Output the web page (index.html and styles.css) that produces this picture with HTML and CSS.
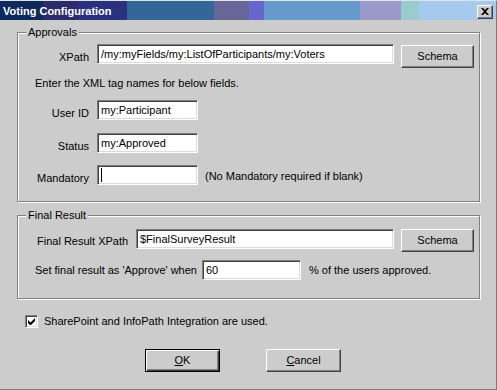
FILE: index.html
```html
<!DOCTYPE html>
<html lang="en">
<head>
<meta charset="UTF-8" />
<title>Voting Configuration</title>
<link rel="stylesheet" href="styles.css">
</head>
<body>
<div class="window">
  <div class="titlebar">
    <span class="title">Voting Configuration</span>
    <button class="close-btn" title="Close">
      <svg width="8" height="7" viewBox="0 0 8 7"><path d="M0 0h2l2 2 2-2h2L5 3.5 8 7H6L4 5 2 7H0l3-3.5z" fill="#000"/></svg>
    </button>
  </div>
  <div class="dialog">
    <!-- Approvals group -->
    <div class="group approvals">
      <span class="group-title">Approvals</span>
      <div class="row">
        <label class="lbl">XPath</label>
        <div class="field xpath">/my:myFields/my:ListOfParticipants/my:Voters</div>
        <button class="btn schema-btn">Schema</button>
      </div>
      <p class="hint">Enter the XML tag names for below fields.</p>
      <div class="row row-user">
        <label class="lbl">User ID</label>
        <div class="field short">my:Participant</div>
      </div>
      <div class="row row-status">
        <label class="lbl">Status</label>
        <div class="field short">my:Approved</div>
      </div>
      <div class="row row-mandatory">
        <label class="lbl">Mandatory</label>
        <div class="field short"><span class="caret"></span></div>
        <span class="note">(No Mandatory required if blank)</span>
      </div>
    </div>
    <!-- Final Result group -->
    <div class="group final">
      <span class="group-title">Final Result</span>
      <div class="row">
        <label class="lbl-left final-lbl">Final Result XPath</label>
        <div class="field final-xpath">$FinalSurveyResult</div>
        <button class="btn schema-btn">Schema</button>
      </div>
      <div class="row row-percent">
        <label class="lbl-left percent-lbl">Set final result as 'Approve' when</label>
        <div class="field percent">60</div>
        <span class="note">% of the users approved.</span>
      </div>
    </div>
    <div class="check-row">
      <span class="checkbox">
        <svg width="7" height="7" viewBox="0 0 7 7"><path d="M0 2v3l2 2h1l4-4V0L2.5 4.5z" fill="#000"/></svg>
      </span>
      <span>SharePoint and InfoPath Integration are used.</span>
    </div>
    <div class="actions">
      <button class="btn action-btn default-btn"><u>O</u>K</button>
      <button class="btn action-btn"><u>C</u>ancel</button>
    </div>
  </div>
</div>
</body>
</html>
```

FILE: styles.css
```css
* { box-sizing: border-box; }
body {
  margin: 0;
  background: #cccccc;
  font-family: "Liberation Sans", Arial, sans-serif;
  font-size: 11px;
  color: #000;
}
.window {
  width: 497px;
  height: 390px;
  background: #cccccc;
  border-top: 1px solid #e2e2e2;
  border-right: 1px solid #7b7b7b;
  border-bottom: 1px solid #7b7b7b;
  display: flex;
  flex-direction: column;
}
.titlebar {
  height: 19px;
  display: flex;
  align-items: center;
  justify-content: space-between;
  padding: 0 3px 0 3px;
  background: linear-gradient(90deg,
    #0e2a5c 0, #0e2a5c 43px,
    #2c2b6b 43px, #2c2b6b 78px,
    #29327e 78px, #29327e 127px,
    #336699 127px, #336699 214px,
    #666699 214px, #666699 249px,
    #6666cc 249px, #6666cc 264px,
    #6699cc 264px, #6699cc 360px,
    #9999cc 360px, #9999cc 401px,
    #99cccc 401px, #99cccc 419px,
    #a6c9ef 419px);
}
.title {
  color: #fff;
  font-weight: bold;
  font-size: 11px;
  line-height: 13px;
  padding-top: 1px;
}
.close-btn {
  width: 16px;
  height: 14px;
  padding: 0;
  margin-top: 2px;
  background: #cccccc;
  border: 1px solid;
  border-color: #fff #404040 #404040 #fff;
  box-shadow: inset -1px -1px 0 #808080;
  display: flex;
  align-items: center;
  justify-content: center;
}
.dialog {
  flex: 1;
  padding: 12px 16px 0 17px;
  display: flex;
  flex-direction: column;
}
/* group boxes */
.group {
  position: relative;
  border: 1px solid #808080;
  box-shadow: inset 1px 1px 0 #fff, 1px 1px 0 #fff;
}
.group-title {
  position: absolute;
  top: -7px;
  left: 8px;
  padding: 0 2px;
  background: #cccccc;
  line-height: 13px;
}
.approvals {
  padding: 11px 0 16px 0;
}
.final {
  margin-top: 13px;
  padding: 13px 0 18px 0;
}
.row {
  display: flex;
  align-items: flex-start;
}
.lbl {
  width: 71px;
  margin-right: 8px;
  text-align: right;
  line-height: 13px;
  padding-top: 7px;
}
.lbl-left {
  line-height: 13px;
}
.final-lbl {
  width: 99px;
  margin-left: 19px;
  padding-top: 6px;
}
.percent-lbl {
  width: 167px;
  margin-left: 17px;
  padding-top: 4px;
}
.field {
  height: 20px;
  background: #fff;
  border: 1px solid;
  border-color: #808080 #fff #fff #808080;
  box-shadow: inset 1px 1px 0 #404040, inset -1px -1px 0 #dcdcdc;
  padding: 3px 3px 0 3px;
  line-height: 13px;
  white-space: nowrap;
  overflow: hidden;
}
.xpath { width: 297px; }
.short { width: 101px; }
.final-xpath { width: 258px; }
.percent { width: 99px; }
.caret {
  display: inline-block;
  width: 1px;
  height: 14px;
  margin-top: -1px;
  background: #000;
  vertical-align: top;
}
.btn {
  font-family: inherit;
  font-size: 11px;
  color: #000;
  background: #cccccc;
  border: 1px solid;
  border-color: #fff #404040 #404040 #fff;
  box-shadow: inset -1px -1px 0 #808080;
  padding: 0;
  line-height: 13px;
}
.schema-btn {
  width: 73px;
  height: 23px;
  margin-left: 7px;
  margin-top: 1px;
}
.final .schema-btn { margin-top: 0; }
.hint {
  margin: 9px 0 0 17px;
  line-height: 13px;
}
.row-user { margin-top: 10px; }
.row-status { margin-top: 13px; }
.row-mandatory { margin-top: 12px; }
.note {
  margin-left: 7px;
  line-height: 13px;
  padding-top: 5px;
}
.row-percent { margin-top: 8px; }
.row-percent .note { margin-left: 8px; padding-top: 4px; }
.check-row {
  display: flex;
  align-items: center;
  gap: 6px;
  margin: 16px 0 0 8px;
  line-height: 13px;
}
.checkbox {
  width: 13px;
  height: 13px;
  background: #fff;
  border: 1px solid;
  border-color: #808080 #fff #fff #808080;
  box-shadow: inset 1px 1px 0 #404040, inset -1px -1px 0 #dcdcdc;
  display: flex;
  align-items: center;
  justify-content: center;
}
.actions {
  display: flex;
  gap: 46px;
  margin: 21px 0 0 128px;
}
.action-btn {
  width: 75px;
  height: 23px;
}
.default-btn {
  border: 1px solid #000;
  box-shadow: inset 1px 1px 0 #fff, inset -1px -1px 0 #404040, inset -2px -2px 0 #808080;
}
```
